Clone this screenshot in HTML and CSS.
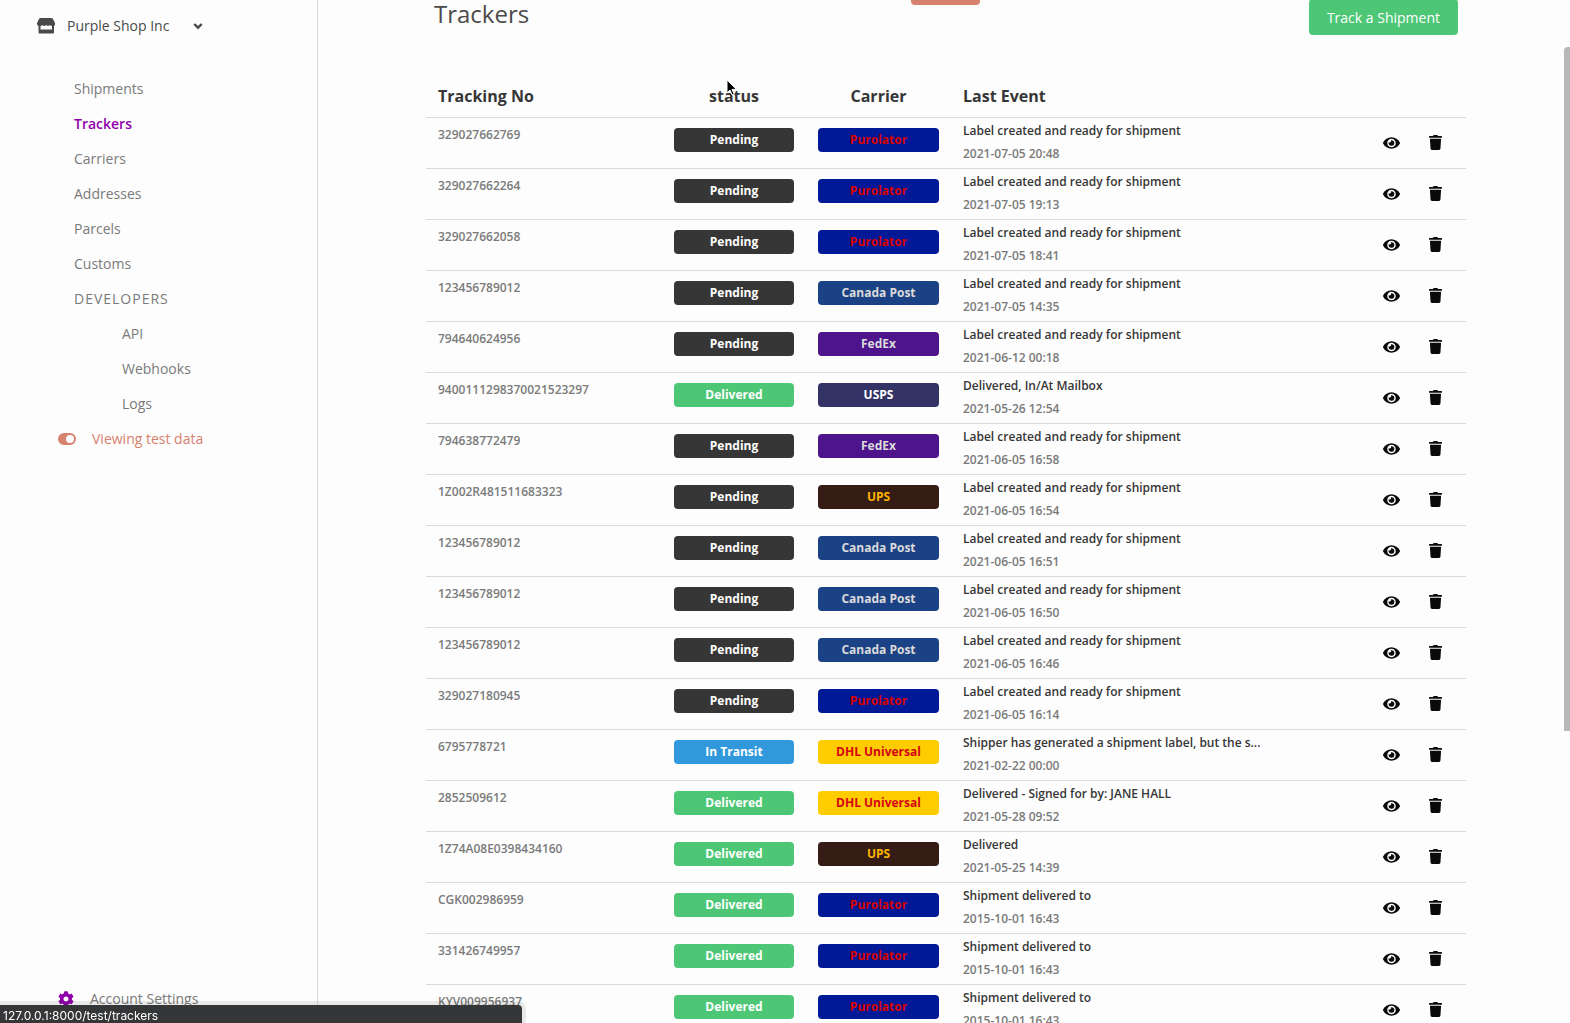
FILE: index.html
```html
<!DOCTYPE html>
<html lang="en">
<head>
<meta charset="utf-8">
<title>Trackers</title>
<link rel="stylesheet" href="styles.css">
</head>
<body>
<svg class="sprite" aria-hidden="true">
  <symbol id="eye" viewBox="0 0 576 512"><path d="M572.52 241.4C518.29 135.59 410.93 64 288 64S57.68 135.64 3.48 241.41a32.35 32.35 0 0 0 0 29.19C57.71 376.41 165.07 448 288 448s230.32-71.64 284.52-177.41a32.35 32.35 0 0 0 0-29.19zM288 400a144 144 0 1 1 144-144 143.93 143.93 0 0 1-144 144zm0-240a95.31 95.31 0 0 0-25.31 3.79 47.85 47.85 0 0 1-66.9 66.9A95.78 95.78 0 1 0 288 160z"/></symbol>
  <symbol id="trash" viewBox="0 0 448 512"><path d="M432 32H312l-9.4-18.7A24 24 0 0 0 281.1 0H166.800a23.720 23.720 0 0 0-21.400 13.300L136 32H16A16 16 0 0 0 0 48v32a16 16 0 0 0 16 16h416a16 16 0 0 0 16-16V48a16 16 0 0 0-16-16zM53.200 467a48 48 0 0 0 47.900 45h245.800a48 48 0 0 0 47.900-45L416 128H32z"/></symbol>
</svg>
<div class="layout">
  <aside class="sidebar">
    <button class="shop" type="button">
      <svg class="shop-icon" viewBox="0 0 18 16"><path fill-rule="evenodd" d="M3.500 0h11q1 0 1.500 1l2 4v1q0 1.500-1 2v6.500q0 1-1 1H2.500q-1 0-1-1V8Q0 7.500 0 6V5l2-4q.5-1 1.500-1zM3.500 8v3.500h11.500V8q-1.500 0-2.200-1-1 1-1.800 1t-1.800-1q-1 1-1.900 1T5.500 7q-.8 1-2 1z"/></svg>
      <span>Purple Shop Inc</span>
      <svg class="chevron" viewBox="0 0 10 8"><path d="M1.300 2 5 5.700 8.700 2"/></svg>
    </button>
    <nav class="menu">
      <a href="#">Shipments</a>
      <a href="#" class="active">Trackers</a>
      <a href="#">Carriers</a>
      <a href="#">Addresses</a>
      <a href="#">Parcels</a>
      <a href="#">Customs</a>
      <span class="label">Developers</span>
      <a href="#" class="sub">API</a>
      <a href="#" class="sub">Webhooks</a>
      <a href="#" class="sub">Logs</a>
      <a href="#" class="mode"><svg class="toggle" viewBox="0 0 18 12"><path fill-rule="evenodd" d="M6 0h6a6 6 0 0 1 0 12H6A6 6 0 0 1 6 0zm6 2a4 4 0 1 0 0 8 4 4 0 0 0 0-8z"/></svg>Viewing test data</a>
    </nav>
    <a href="#" class="settings"><svg class="cog" viewBox="0 0 512 512"><path d="M487.400 315.700l-42.600-24.600c4.300-23.200 4.300-47 0-70.200l42.600-24.600c4.900-2.800 7.100-8.600 5.500-14-11.100-35.600-30-67.800-54.700-94.600-3.800-4.100-10-5.100-14.800-2.300L380.800 110c-17.900-15.400-38.500-27.300-60.800-35.100V25.800c0-5.600-3.900-10.500-9.400-11.700-36.700-8.200-74.300-7.800-109.200 0-5.500 1.200-9.400 6.100-9.400 11.700V75c-22.200 7.900-42.800 19.800-60.800 35.100L88.700 85.500c-4.900-2.800-11-1.900-14.800 2.300-24.700 26.700-43.600 58.900-54.700 94.600-1.700 5.400.6 11.200 5.500 14L67.300 221c-4.300 23.200-4.300 47 0 70.200l-42.600 24.600c-4.900 2.800-7.100 8.600-5.500 14 11.100 35.600 30 67.800 54.700 94.600 3.800 4.100 10 5.100 14.800 2.300l42.600-24.600c17.900 15.400 38.500 27.300 60.800 35.100v49.200c0 5.600 3.900 10.500 9.400 11.700 36.700 8.200 74.300 7.800 109.200 0 5.500-1.200 9.400-6.100 9.400-11.700v-49.200c22.200-7.900 42.800-19.800 60.800-35.100l42.600 24.600c4.900 2.800 11 1.900 14.800-2.300 24.700-26.700 43.600-58.900 54.700-94.600 1.500-5.500-.7-11.300-5.600-14.100zM256 336c-44.100 0-80-35.900-80-80s35.900-80 80-80 80 35.900 80 80-35.900 80-80 80z"/></svg>Account Settings</a>
  </aside>
  <main class="main">
    <header class="page-head">
      <h1>Trackers</h1>
      <button class="primary" type="button">Track a Shipment</button>
    </header>
    <table class="trackers">
      <colgroup><col class="c-no"><col class="c-status"><col class="c-carrier"><col><col class="c-actions"></colgroup>
      <thead><tr><th>Tracking No</th><th class="center">status</th><th class="center">Carrier</th><th>Last Event</th><th></th></tr></thead>
      <tbody id="rows"></tbody>
    </table>
  </main>
</div>
<div class="test-tab"></div>
<div class="scroll-thumb"></div>
<div class="status-bar">127.0.0.1:8000/test/trackers</div>
<svg class="pointer" viewBox="0 0 12 18"><path d="M1 1v13l3-3 2.200 5 2-1-2.200-4.600H10.500z"/></svg>
<script src="rows.js"></script>
</body>
</html>
```
FILE: rows.js
```js
const label = 'Label created and ready for shipment';
const trackers = [
  ['329027662769', 'Pending', 'Purolator', label, '2021-07-05 20:48'],
  ['329027662264', 'Pending', 'Purolator', label, '2021-07-05 19:13'],
  ['329027662058', 'Pending', 'Purolator', label, '2021-07-05 18:41'],
  ['123456789012', 'Pending', 'Canada Post', label, '2021-07-05 14:35'],
  ['794640624956', 'Pending', 'FedEx', label, '2021-06-12 00:18'],
  ['9400111298370021523297', 'Delivered', 'USPS', 'Delivered, In/At Mailbox', '2021-05-26 12:54'],
  ['794638772479', 'Pending', 'FedEx', label, '2021-06-05 16:58'],
  ['1Z002R481511683323', 'Pending', 'UPS', label, '2021-06-05 16:54'],
  ['123456789012', 'Pending', 'Canada Post', label, '2021-06-05 16:51'],
  ['123456789012', 'Pending', 'Canada Post', label, '2021-06-05 16:50'],
  ['123456789012', 'Pending', 'Canada Post', label, '2021-06-05 16:46'],
  ['329027180945', 'Pending', 'Purolator', label, '2021-06-05 16:14'],
  ['6795778721', 'In Transit', 'DHL Universal', 'Shipper has generated a shipment label, but the s...', '2021-02-22 00:00'],
  ['2852509612', 'Delivered', 'DHL Universal', 'Delivered - Signed for by: JANE HALL', '2021-05-28 09:52'],
  ['1Z74A08E0398434160', 'Delivered', 'UPS', 'Delivered', '2021-05-25 14:39'],
  ['CGK002986959', 'Delivered', 'Purolator', 'Shipment delivered to', '2015-10-01 16:43'],
  ['331426749957', 'Delivered', 'Purolator', 'Shipment delivered to', '2015-10-01 16:43'],
  ['KYV009956937', 'Delivered', 'Purolator', 'Shipment delivered to', '2015-10-01 16:43']
];
const slug = s => s.toLowerCase().replace(' ', '-');
document.getElementById('rows').innerHTML = trackers.map(([no, status, carrier, event, date]) => `
  <tr>
    <td class="number">${no}</td>
    <td><span class="pill ${slug(status)}">${status}</span></td>
    <td><span class="pill ${slug(carrier)}">${carrier}</span></td>
    <td class="event"><p>${event}</p><p class="date">${date}</p></td>
    <td><div class="actions">
      <button type="button" aria-label="View"><svg class="eye"><use href="#eye"/></svg></button>
      <button type="button" aria-label="Delete"><svg class="trash"><use href="#trash"/></svg></button>
    </div></td>
  </tr>`).join('');
```
FILE: styles.css
```css
* { box-sizing: border-box; }
body {
  margin: 0;
  height: 100vh;
  overflow: hidden;
  background: #fdfdfd;
  color: #4a4a4a;
  font: 14px/20px "Open Sans", sans-serif;
}
button { border: 0; background: none; padding: 0; font: inherit; color: inherit; cursor: pointer; }
a { color: inherit; text-decoration: none; }
p, h1 { margin: 0; }
.sprite { display: none; }
.layout { display: flex; height: 100vh; }

.sidebar {
  flex: 0 0 318px;
  display: flex;
  flex-direction: column;
  border-right: 1px solid #dbdbdb;
  color: #7a7a7a;
}
.shop { display: flex; align-items: center; margin: 16px 0 0 37px; color: #4a4a4a; }
.shop-icon { width: 18px; height: 16px; margin-right: 12px; fill: #4a4a4a; }
.chevron { width: 10px; height: 8px; margin-left: 24px; fill: none; stroke: #4a4a4a; stroke-width: 2.400; }
.menu { display: flex; flex-direction: column; margin-top: 35px; padding-left: 74px; line-height: 35px; }
.active { color: #9000aa; font-weight: 600; }
.label { letter-spacing: 1px; text-transform: uppercase; }
.sub { padding-left: 48px; }
.mode { display: flex; align-items: center; margin-left: -16px; color: #d7816f; }
.toggle { width: 18px; height: 12px; margin-right: 16px; fill: currentColor; }
.settings { display: flex; align-items: center; margin: auto 0 14px 58px; }
.cog { width: 16px; height: 16px; margin-right: 16px; fill: #9000aa; }

.main { flex: 1; min-width: 0; padding: 0 104px 0 108px; }
.page-head { display: flex; justify-content: space-between; margin-top: -1px; padding: 0 8px; }
h1 { color: #4a4a4a; font-size: 24px; font-weight: 400; line-height: 30px; }
.primary { height: 36px; padding: 1px 18px 0; border-radius: 4px; background: #4dc776; color: #fff; }

.trackers { width: 100%; margin-top: 41px; border-collapse: collapse; table-layout: fixed; font-size: 12px; }
.c-no { width: 236px; }
.c-status { width: 144px; }
.c-carrier { width: 145px; }
.c-actions { width: 97px; }
th { height: 41px; padding: 0 12px; border-bottom: 1px solid #dbdbdb; color: #363636; font-size: 16px; font-weight: 700; text-align: left; }
th.center { text-align: center; }
td { height: 51px; padding: 0 12px; border-bottom: 1px solid #dbdbdb; vertical-align: top; }
.number { padding-top: 7px; color: #7a7a7a; font-weight: 600; }
.pill { display: block; margin-top: 10px; border-radius: 4px; color: #fff; font-weight: 700; line-height: 24px; text-align: center; }
.pending { background: #363636; }
.delivered { background: #4dc776; }
.in-transit { background: #3298dc; }
.purolator { background: #001996; color: #d90000; }
.canada-post { background: #1b4284; color: #dbdbdb; }
.fedex { background: #4d148c; color: #dbdbdb; }
.usps { background: #333366; }
.ups { background: #351c15; color: #ffb500; }
.dhl-universal { background: #ffcc00; color: #d40511; }
.event { padding-top: 1px; color: #363636; font-weight: 600; line-height: 23px; white-space: nowrap; }
.date { color: #7a7a7a; }
td:last-child { padding: 0; }
.actions { display: flex; padding-top: 13px; }
.actions button { display: flex; align-items: center; justify-content: center; width: 44px; height: 24px; fill: #0a0a0a; }
.eye { width: 17px; height: 16px; }
.trash { width: 13px; height: 15px; }

.test-tab { position: fixed; top: 0; left: 911px; width: 69px; height: 5px; border-radius: 0 0 4px 4px; background: #d7816f; }
.scroll-thumb { position: fixed; top: 47px; right: 0; width: 6px; height: 684px; border-radius: 4px 0 0 0; background: #b8b8b8; }
.status-bar {
  position: fixed;
  bottom: 0;
  left: 0;
  width: 522px;
  height: 18px;
  padding: 1px 0 0 3px;
  border-radius: 0 4px 0 0;
  background: #353638;
  box-shadow: 0 0 0 4px rgba(0, 0, 0, 0.08);
  color: #fff;
  font: 12px/20px Inter, sans-serif;
}
.pointer { position: fixed; top: 79px; left: 726px; width: 12px; height: 18px; fill: #000; stroke: #fff; }
```
